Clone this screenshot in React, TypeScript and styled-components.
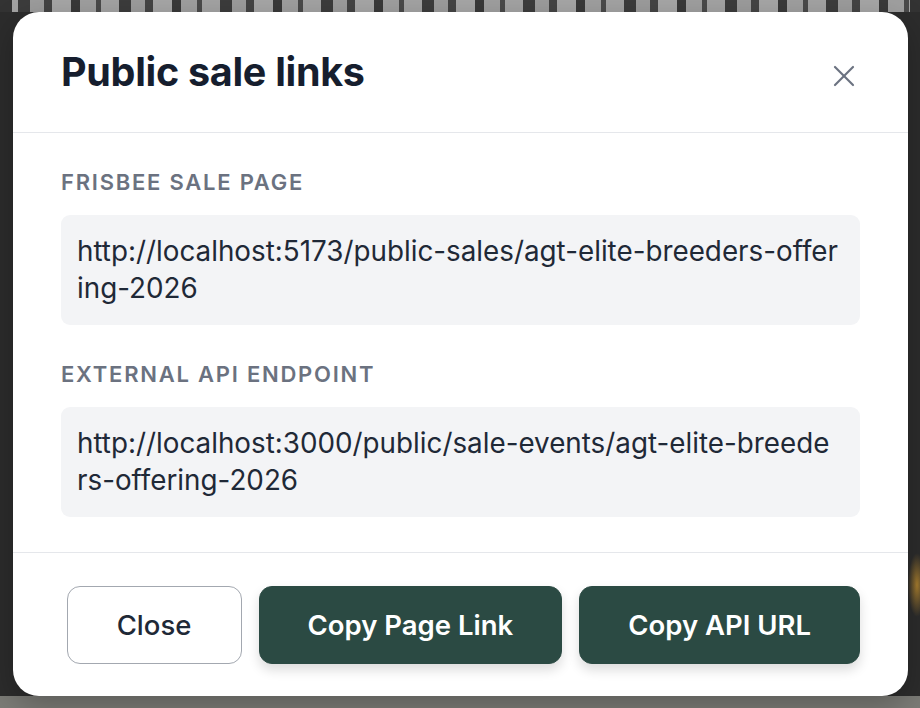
import styled, { createGlobalStyle } from 'styled-components';

const GlobalStyle = createGlobalStyle`
	html, body {
		margin: 0;
		padding: 0;
	}
	body {
		font-family: Inter, "Noto Sans", "Liberation Sans", sans-serif;
		-webkit-font-smoothing: antialiased;
	}
	* {
		box-sizing: border-box;
	}
`;

const links = [
	{
		label: 'Frisbee sale page',
		url: 'http://localhost:5173/public-sales/agt-elite-breeders-offering-2026',
	},
	{
		label: 'External API endpoint',
		url: 'http://localhost:3000/public/sale-events/agt-elite-breeders-offering-2026',
	},
];

function CloseIcon() {
	return (
		<svg width="22" height="22" viewBox="0 0 22 22" fill="none" stroke="currentColor" strokeWidth="2.2" strokeLinecap="round">
			<path d="M2 2 20 20" />
			<path d="M20 2 2 20" />
		</svg>
	);
}

export default function App() {
	return (
		<>
			<GlobalStyle />
			<Backdrop>
				<Dialog role="dialog" aria-labelledby="public-links-title">
					<Header>
						<Title id="public-links-title">Public sale links</Title>
						<IconButton aria-label="Close">
							<CloseIcon />
						</IconButton>
					</Header>
					<Body>
						{links.map((link) => (
							<Field key={link.label}>
								<FieldLabel>{link.label}</FieldLabel>
								<UrlBox>{link.url}</UrlBox>
							</Field>
						))}
					</Body>
					<Footer>
						<Button>Close</Button>
						<Button $primary>Copy Page Link</Button>
						<Button $primary>Copy API URL</Button>
					</Footer>
				</Dialog>
			</Backdrop>
		</>
	);
}

// blurred page behind the dialog: a strip of large dark lettering on top,
// a grey bar at the bottom, dark gutters at the sides
const Backdrop = styled.div`
	min-height: 708px;
	display: flex;
	align-items: flex-start;
	padding: 12px 12px 12px 13px;
	background:
		linear-gradient(90deg, #333 0 12px, transparent 12px calc(100% - 10px), #333 calc(100% - 10px)) top / 100% 12px no-repeat,
		repeating-linear-gradient(
				90deg,
				#a3a3a3 0 18px,
				#3c3c3c 18px 30px,
				#9c9c9c 30px 44px,
				#444 44px 52px,
				#a6a6a6 52px 71px,
				#393939 71px 80px,
				#9f9f9f 80px 96px,
				#4a4a4a 96px 101px
			)
			top / 100% 12px no-repeat,
		linear-gradient(#7b7b76, #7b7b76) bottom / 100% 12px no-repeat,
		radial-gradient(ellipse 9px 32px at 917px 585px, #a77d2e, transparent),
		#2c2c2c;
`;

const Dialog = styled.div`
	width: 895px;
	height: 684px;
	display: flex;
	flex-direction: column;
	background: #ffffff;
	border-radius: 26px;
	overflow: hidden;
	box-shadow: 0 10px 30px rgba(0, 0, 0, 0.25);
`;

const Header = styled.div`
	display: flex;
	align-items: center;
	justify-content: space-between;
	padding: 36px 53px 36px 48px;
	border-bottom: 1px solid #e5e7eb;
`;

const Title = styled.h2`
	margin: 0;
	font-size: 39.5px;
	line-height: 48px;
	font-weight: 700;
	letter-spacing: -0.3px;
	color: #161e2e;
`;

const IconButton = styled.button`
	display: flex;
	align-items: center;
	justify-content: center;
	margin-top: 8px;
	padding: 0;
	border: none;
	background: none;
	color: #6b7280;
	cursor: pointer;
`;

const Body = styled.div`
	flex: 1;
	display: flex;
	flex-direction: column;
	gap: 35px;
	padding: 35px 48px 35px;
	border-bottom: 1px solid #e5e7eb;
`;

const Field = styled.div`
	display: flex;
	flex-direction: column;
	gap: 18px;
`;

const FieldLabel = styled.div`
	font-size: 22px;
	line-height: 29px;
	font-weight: 600;
	letter-spacing: 0.08em;
	text-transform: uppercase;
	color: #6b7280;
`;

const UrlBox = styled.div`
	padding: 18px 21px 18px 16px;
	border-radius: 9px;
	background: #f3f4f6;
	font-size: 27.8px;
	line-height: 37px;
	color: #1f2937;
	word-break: break-all;
`;

const Footer = styled.div`
	display: flex;
	justify-content: flex-end;
	gap: 17px;
	padding: 33px 48px;
`;

const Button = styled.button<{ $primary?: boolean }>`
	height: 78px;
	padding: 0 48px;
	min-width: ${(p) => (p.$primary ? 'auto' : '175px')};
	border-radius: 13px;
	border: 1px solid ${(p) => (p.$primary ? '#2b4a43' : '#a3a8b0')};
	background: ${(p) => (p.$primary ? '#2b4a43' : '#ffffff')};
	color: ${(p) => (p.$primary ? '#ffffff' : '#1f2937')};
	box-shadow: ${(p) => (p.$primary ? '0 6px 12px rgba(0, 0, 0, 0.14)' : 'none')};
	font-family: inherit;
	font-size: 27.5px;
	font-weight: ${(p) => (p.$primary ? 600 : 500)};
	cursor: pointer;
`;
